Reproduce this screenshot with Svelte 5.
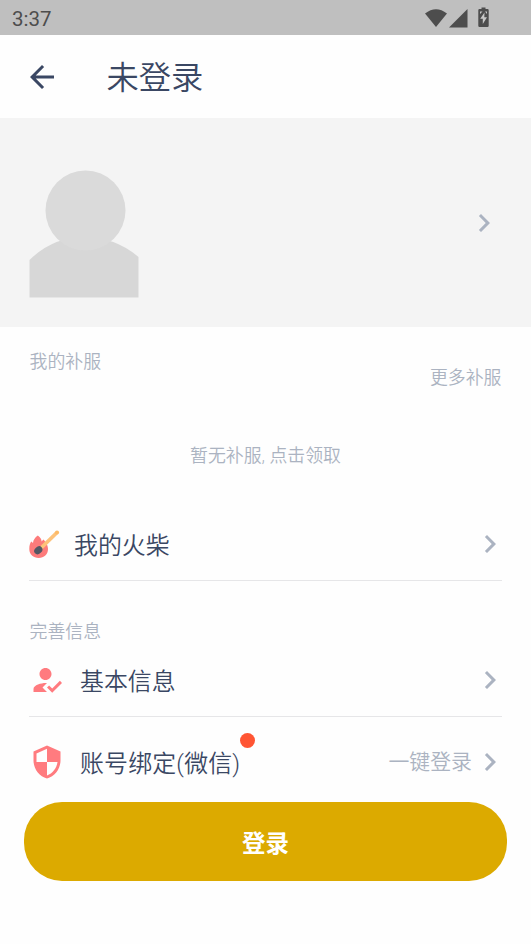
<script>
	let loggedIn = false;
	let title = '未登录';
	let time = '3:37';
</script>

<svelte:head>
	<title>{title}</title>
</svelte:head>

{#snippet chevron()}
	<svg class="icon chevron" viewBox="0 0 24 24">
		<path d="M10 6L8.59 7.41 13.17 12l-4.58 4.59L10 18l6-6z" />
	</svg>
{/snippet}

<div class="app">
	<div class="status">
		<span>{time}</span>
		<svg width="68" height="24" viewBox="0 0 68 24">
			<path d="M0 7.500Q11-1 22 7.500L11 21z" />
			<path d="M42.500 3v18.500H24z" />
			<path d="M54.500 3h2V1.500h4V3h2q1.200 0 1.200 1.200v15.600Q63.700 21 62.500 21h-8q-1.200 0-1.200-1.200V4.200Q53.300 3 54.500 3z" />
			<path class="bolt" d="M59.500 6.500l-4.300 6.300h2.600V18l4.200-6.800h-2.700z" />
			<path class="bolt" d="M55 5.500h2.500L55 8zM60 5.500h2v2.500z" />
		</svg>
	</div>

	<header>
		<svg class="icon back" viewBox="0 0 24 24">
			<path d="M20 11H7.830l5.590-5.590L12 4l-8 8 8 8 1.410-1.410L7.830 13H20v-2z" />
		</svg>
		<h1>{title}</h1>
	</header>

	<section class="profile">
		<svg width="110" height="128" viewBox="0 0 110 128">
			<path fill="#d7d7d7" d="M.5 90Q24 67 55 67T109.500 87V127.500H.5z" />
			<circle fill="#dadada" cx="56.500" cy="40.500" r="40" />
		</svg>
		{@render chevron()}
	</section>

	<section class="clothes">
		<div class="labels">
			<span>我的补服</span>
			<span class="more">更多补服</span>
		</div>
		<p>暂无补服, 点击领取</p>
	</section>

	<div class="row match">
		<svg width="32" height="30" viewBox="0 0 32 30">
			<path fill="#fd7b7b" d="M8.800 6.500c2.800 1.800 3.800 4 3.800 6l1.800-2C16.300 12.500 19 16 19 20c0 5.500-4 9-9.300 9S.3 25.500.3 20c0-3.500.8-6 2-7.500l1.700 1.500C4.200 11 6 8.500 8.800 6.500z" />
			<path stroke="#fdc27a" stroke-width="3.800" d="M10.500 20.500L27.500 4" />
			<circle fill="#fdba66" cx="28" cy="3.500" r="2.100" />
			<ellipse fill="#555763" cx="9.300" cy="21.300" rx="4.500" ry="3.500" transform="rotate(-43 9.300 21.300)" />
		</svg>
		<span class="name">我的火柴</span>
		{@render chevron()}
	</div>

	<h2>完善信息</h2>

	<div class="row basic">
		<svg class="icon" viewBox="0 0 24 24">
			<path d="M9 17l3-2.940c-.39-.04-.68-.06-1-.06-2.670 0-8 1.340-8 4v2h9l-3-3zm2-5c2.210 0 4-1.790 4-4s-1.790-4-4-4-4 1.790-4 4 1.790 4 4 4m4.470 8.500L12 17l1.400-1.410 2.070 2.080 5.130-5.170 1.400 1.420z" />
		</svg>
		<span class="name">基本信息</span>
		{@render chevron()}
	</div>

	<div class="row account">
		<svg class="icon" viewBox="0 0 24 24">
			<path d="M12 1L3 5v6c0 5.550 3.840 10.740 9 12 5.160-1.260 9-6.450 9-12V5l-9-4zm0 10.990h7c-.53 4.120-3.280 7.790-7 8.940V12H5V6.300l7-3.110v8.800z" />
		</svg>
		<span class="name">
			账号绑定(微信)
			{#if !loggedIn}<i class="dot"></i>{/if}
		</span>
		<span class="hint">一键登录</span>
		{@render chevron()}
	</div>

	<button type="button">登录</button>
</div>

<style>
	:global(body) {
		background: #fefefe;
	}

	.app {
		height: 944px;
		overflow: hidden;
		display: flex;
		flex-direction: column;
		color: #3a4763;
		font-family: Roboto, 'Noto Sans CJK SC', sans-serif;
		font-weight: 350;
	}

	svg {
		flex: none;
		display: block;
	}
	.icon {
		width: 36px;
		height: 36px;
		fill: #ff7b7f;
	}
	.chevron {
		margin-left: auto;
		fill: #abb3c1;
	}

	.status {
		height: 35px;
		box-sizing: border-box;
		padding: 2px 38px 0 12px;
		display: flex;
		align-items: center;
		justify-content: space-between;
		background: #bfbfbf;
		color: #4d4d4d;
		font-size: 20.500px;
		font-weight: 450;
	}
	.status svg {
		fill: #4d4d4d;
		margin-bottom: 2px;
	}
	.status .bolt {
		fill: #c7c7c7;
	}

	header {
		height: 83px;
		padding-left: 23.500px;
		display: flex;
		align-items: center;
	}
	.back {
		fill: #3a4763;
	}
	h1 {
		margin: 2px 0 0 47px;
		font-size: 32.300px;
		line-height: 40px;
		font-weight: inherit;
	}

	.profile {
		height: 209px;
		box-sizing: border-box;
		padding: 52px 29px 0;
		display: flex;
		align-items: flex-start;
		background: #f4f4f4;
	}
	.profile .chevron {
		margin-top: 35px;
	}

	.clothes {
		height: 181px;
		box-sizing: border-box;
		padding: 23px 29.500px 0;
		color: #abb3c1;
		font-size: 17.900px;
		line-height: 24px;
	}
	.labels {
		display: flex;
		justify-content: space-between;
	}
	.more {
		margin-top: 16px;
	}
	.clothes p {
		margin: 54px 0 0;
		text-align: center;
	}

	.row {
		height: 72px;
		margin: 0 29px;
		display: flex;
		align-items: center;
		border-bottom: 1px solid #e6e6e8;
	}
	.row .chevron {
		margin-right: -6px;
	}
	.name {
		position: relative;
		margin: 4px 0 0 15px;
		font-size: 23.900px;
		line-height: 32px;
	}
	.match .name {
		margin-left: 13px;
	}

	h2 {
		margin: 39px 29.500px 0;
		color: #abb3c1;
		font-size: 17.900px;
		line-height: 24px;
		font-weight: inherit;
	}

	.row.account {
		height: 85px;
		padding-top: 5px;
		box-sizing: border-box;
		border: 0;
	}
	.account .name {
		letter-spacing: 0.200px;
	}
	.dot {
		position: absolute;
		top: -15px;
		right: -15px;
		width: 15px;
		height: 15px;
		border-radius: 50%;
		background: #ff5533;
	}
	.hint {
		margin: 0 0 4px auto;
		color: #abb3c1;
		font-size: 20.900px;
	}
	.hint + .chevron {
		margin-left: 0;
	}

	button {
		flex: none;
		height: 79px;
		margin: 0 24px;
		padding: 4px 0 0;
		border: 0;
		border-radius: 38px;
		background: #dcaa00;
		color: #fff;
		font: bold 23.500px/32px Roboto, 'Noto Sans CJK SC', sans-serif;
	}
</style>
